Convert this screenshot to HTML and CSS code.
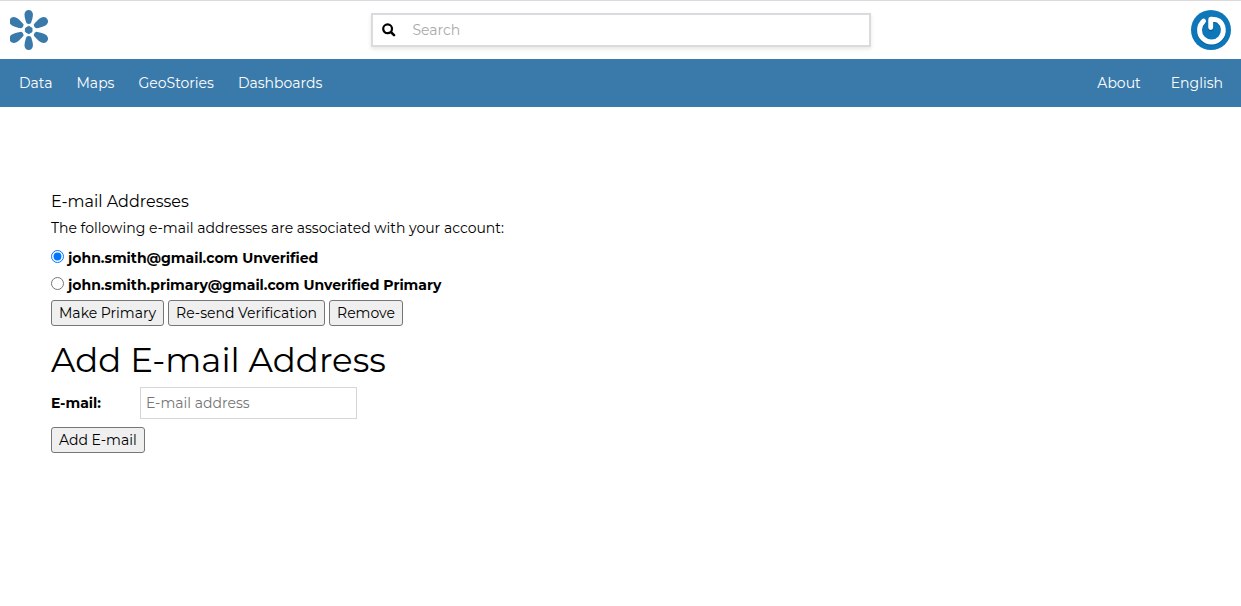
FILE: index.html
```html
<!DOCTYPE html>
<html lang="en">
<head>
<meta charset="utf-8">
<meta name="viewport" content="width=device-width, initial-scale=1">
<title>E-mail Addresses</title>
<link rel="stylesheet" href="styles.css">
</head>
<body>
<header class="topbar">
  <a class="brand" href="#" aria-label="Home">
    <svg viewBox="0 0 38 40" width="38" height="40" fill="#3a7aab">
      <defs><path id="petal" d="M-2.200 -6.800C-3.200 -9.500 -4.200 -12.500 -4.200 -15.500C-4.200 -18.200 -2.400 -20 0 -20S4.200 -18.200 4.200 -15.500C4.200 -12.500 3.200 -9.500 2.200 -6.800Q0 -5.200 -2.200 -6.800Z"/></defs>
      <g transform="translate(18.700 20)">
        <use href="#petal"/>
        <use href="#petal" transform="rotate(180)"/>
        <use href="#petal" transform="rotate(60) scale(1.060 1.080)"/>
        <use href="#petal" transform="rotate(120) scale(1.060 1.080)"/>
        <use href="#petal" transform="rotate(240) scale(1.060 1.080)"/>
        <use href="#petal" transform="rotate(300) scale(1.060 1.080)"/>
        <path d="M0 -3.700L3.300 -1.800V1.800L0 3.700L-3.300 1.800V-1.800Z" stroke="#3a7aab" stroke-linejoin="round"/>
      </g>
    </svg>
  </a>
  <form class="search" role="search">
    <button class="search-button" type="button" aria-label="Search">
      <svg viewBox="0 0 14 14" width="14" height="14" fill="none" stroke="#000"><circle cx="5.600" cy="5.800" r="4.400" stroke-width="2.200"/><path d="M9 9.200L12 12.200" stroke-width="2.600" stroke-linecap="round"/></svg>
    </button>
    <input class="search-input" type="search" placeholder="Search" aria-label="Search">
  </form>
  <a class="avatar" href="#" aria-label="Account">
    <svg viewBox="0 0 40 40" width="40" height="40" fill="none" stroke-linecap="round" stroke-linejoin="round">
      <circle cx="20" cy="20" r="20" fill="#0d77b9"/>
      <path d="M12.600 12A11.900 11.900 0 1 0 27.800 11.600Q25 9.800 19.700 10V18.500" stroke="#085f96" stroke-width="5.400"/>
      <path d="M12.600 11.200A11.900 11.900 0 1 0 27.800 10.800Q25 9 19.700 9.200V17.500" stroke="#fff" stroke-width="4.900"/>
    </svg>
  </a>
</header>
<nav class="navbar">
  <div class="nav-main">
    <a class="nav-link" href="#">Data</a>
    <a class="nav-link" href="#">Maps</a>
    <a class="nav-link" href="#">GeoStories</a>
    <a class="nav-link" href="#">Dashboards</a>
  </div>
  <div class="nav-side">
    <a class="nav-link" href="#">About</a>
    <a class="nav-link" href="#">English</a>
  </div>
</nav>
<main class="content">
  <h2 class="subtitle">E-mail Addresses</h2>
  <p class="intro">The following e-mail addresses are associated with your account:</p>
  <form class="email-list">
    <label class="email-option"><input class="radio" type="radio" name="email" checked>john.smith@gmail.com Unverified</label>
    <label class="email-option"><input class="radio" type="radio" name="email">john.smith.primary@gmail.com Unverified Primary</label>
    <div class="actions">
      <button class="button" type="button">Make Primary</button>
      <button class="button" type="button">Re-send Verification</button>
      <button class="button" type="button">Remove</button>
    </div>
  </form>
  <h1 class="title">Add E-mail Address</h1>
  <form class="add-form">
    <div class="field">
      <label class="field-label" for="new-email">E-mail:</label>
      <input class="field-input" id="new-email" type="email" placeholder="E-mail address">
    </div>
    <button class="button" type="button">Add E-mail</button>
  </form>
</main>
</body>
</html>
```
FILE: styles.css
```css
* { box-sizing: border-box; }
body {
  margin: 0;
  background: #fff;
  color: #000;
  font: 400 14px/20px Montserrat, Inter, sans-serif;
}
.topbar {
  display: grid;
  grid-template-columns: 1fr minmax(0, 500px) 1fr;
  align-items: center;
  padding: 9px 10px;
  border-top: 1px solid #dadade;
}
.brand, .avatar { display: flex; }
.avatar { justify-self: end; }
.search {
  display: flex;
  align-items: center;
  height: 34px;
  border: 2px solid #dbdbdd;
  box-shadow: 0 2px 4px rgba(0, 0, 0, .1);
}
.search-button {
  display: flex;
  padding: 0 9px;
  border: 0;
  background: none;
}
.search-input {
  flex: 1;
  min-width: 0;
  padding: 0 8px;
  border: 0;
  outline: 0;
  background: none;
  color: inherit;
  font: inherit;
}
.search-input::placeholder { color: #a9a9a9; }
.navbar {
  display: flex;
  justify-content: space-between;
  padding: 14px 18px 14px 19px;
  background: #3a7aab;
}
.nav-main, .nav-side { display: flex; }
.nav-main { gap: 24px; }
.nav-side { gap: 30px; }
.nav-link {
  color: #fff;
  text-decoration: none;
}
.content { padding: 85px 51px; }
.subtitle {
  margin: 0 0 6px;
  font-size: 16px;
  font-weight: 400;
}
.intro { margin: 0 0 10px; }
.email-option {
  display: flex;
  align-items: flex-start;
  gap: 4px;
  margin-bottom: 7px;
  font-weight: 700;
}
.radio { width: 13px; height: 13px; margin: 2px 0 0; }
.actions { display: flex; gap: 4px; margin-top: -2px; }
.button {
  height: 26px;
  padding: 0 7px;
  border: 1px solid #767676;
  border-radius: 3px;
  background: #efefef;
  color: #000;
  font: inherit;
}
.title {
  margin: 14px 0 7px;
  font-size: 34px;
  font-weight: 400;
  line-height: 40px;
}
.field { display: flex; align-items: center; margin-bottom: 8px; }
.field-label { width: 89px; font-weight: 700; }
.field-input {
  width: 217px;
  height: 32px;
  padding: 0 5px;
  border: 1px solid #d6d6d6;
  color: #000;
  font: inherit;
}
.field-input::placeholder { color: #757575; }
```
